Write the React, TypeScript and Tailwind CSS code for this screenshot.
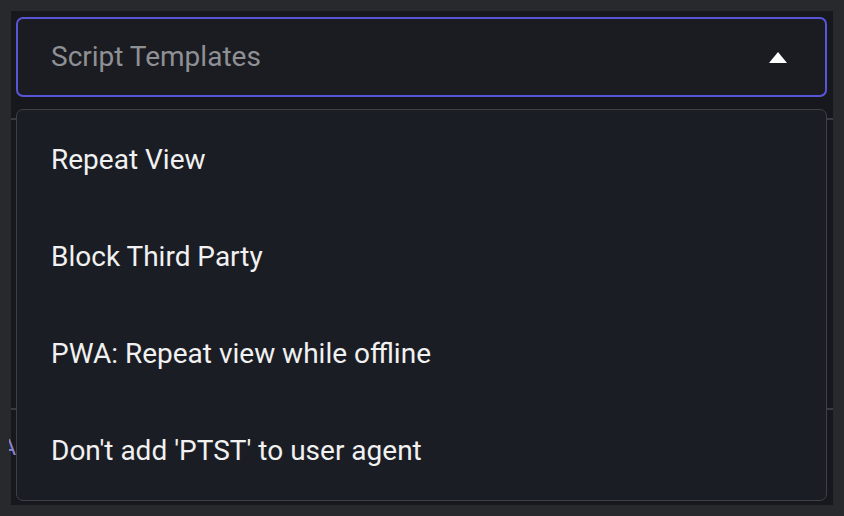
const templates = [
  "Repeat View",
  "Block Third Party",
  "PWA: Repeat view while offline",
  "Don't add 'PTST' to user agent",
];

export default function App() {
  return (
    <div
      className="h-[516px] w-[844px] bg-[#28292d] p-[11px]"
      style={{ fontFamily: "Roboto, 'Noto Sans', sans-serif" }}
    >
      <div className="relative flex h-[494px] w-[822px] flex-col bg-[#17181d] pt-[6px]">
        <button className="mx-[5px] flex h-[80px] w-[811px] shrink-0 items-center justify-between rounded-[7px] border-2 border-[#5856d6] bg-[#1a1c22] pl-[33px] pr-[38px] text-left">
          <span className="text-[28px] leading-[36px] text-[#8f9094]">
            Script Templates
          </span>
          <svg width="18" height="11" viewBox="0 0 18 11">
            <path d="M9 0 L18 11 L0 11 Z" fill="#ffffff" />
          </svg>
        </button>

        {/* page content behind the open menu */}
        <div className="mt-[21px] h-[290px] shrink-0 border-t-2 border-[#3a3b40]" />
        <div className="flex border-t-2 border-[#3a3b40] pt-[27px]">
          <div className="-ml-[2px] flex h-[18px] w-[7px] justify-end overflow-hidden">
            <span className="shrink-0 text-[22px] leading-none text-[#8a86d8]">A</span>
          </div>
        </div>

        <ul className="absolute left-[5px] top-[98px] w-[811px] rounded-[7px] border border-[#3f4046] bg-[#1b1d24] py-[1px]">
          {templates.map((t) => (
            <li
              key={t}
              className="flex h-[97px] items-center pl-[34px] text-[28px] leading-[36px] text-[#f1f1f1]"
            >
              {t}
            </li>
          ))}
        </ul>
      </div>
    </div>
  );
}
